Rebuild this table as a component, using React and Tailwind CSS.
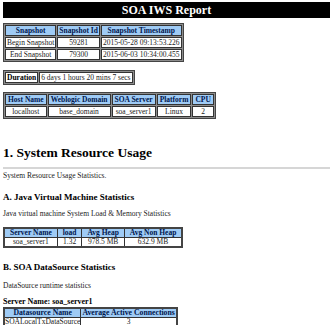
import React from 'react';

// spaced tables (top block) and compact tables (sections)
const Th = ({ children, compact, pad = 'px-[1px]', size = 'text-[7.5px]' }) => (
    <th className={`border border-[#333] bg-[#9fcbf5] py-0 font-bold text-[#00164d] whitespace-nowrap ${pad} ${size} ${compact ? 'leading-[8px]' : 'leading-[9px]'}`}>{children}</th>
);

const Td = ({ children, bold, compact, pad = 'px-[1px]', size = 'text-[7.5px]' }) => (
    <td className={`border border-[#333] bg-white py-0 text-center text-[#222] whitespace-nowrap ${pad} ${size} ${bold ? 'font-bold text-black' : ''} ${compact ? 'leading-[8px]' : 'leading-[9px]'}`}>{children}</td>
);

const Grid = ({ children }) => (
    <table className="border-separate border-spacing-[1px] border border-[#444] bg-[#8c8c8c]">
        <tbody>{children}</tbody>
    </table>
);

const Compact = ({ children }) => (
    <table className="border-collapse border-2 border-[#444]">
        <tbody>{children}</tbody>
    </table>
);

const App = () => {
    return (
        <div className="w-[333px] h-[325px] overflow-hidden bg-white px-[3px] pt-[2px] font-['Liberation_Serif',serif] text-black">
            <div className="h-[16px] bg-black text-center text-[12px] font-bold leading-[16px] text-white">SOA IWS Report</div>

            <div className="mt-[5px]">
                <Grid>
                    <tr><Th>Snapshot</Th><Th>Snapshot Id</Th><Th>Snapshot Timestamp</Th></tr>
                    <tr><Td>Begin Snapshot</Td><Td>59281</Td><Td>2015-05-28 09:13:53.226</Td></tr>
                    <tr><Td>End Snapshot</Td><Td>79300</Td><Td>2015-06-03 10:34:00.455</Td></tr>
                </Grid>
            </div>

            <div className="mt-[8px]">
                <Grid>
                    <tr><Td bold>Duration</Td><Td>6 days 1 hours 20 mins 7 secs</Td></tr>
                </Grid>
            </div>

            <div className="mt-[7px]">
                <Grid>
                    <tr>
                        <Th pad="px-[2px]">Host Name</Th>
                        <Th pad="px-[2px]">Weblogic Domain</Th>
                        <Th pad="px-[2px]">SOA Server</Th>
                        <Th pad="px-[2px]">Platform</Th>
                        <Th pad="px-[2px]">CPU</Th>
                    </tr>
                    <tr>
                        <Td pad="px-[2px]">localhost</Td>
                        <Td pad="px-[2px]">base_domain</Td>
                        <Td pad="px-[2px]">soa_server1</Td>
                        <Td pad="px-[2px]">Linux</Td>
                        <Td pad="px-[2px]">2</Td>
                    </tr>
                </Grid>
            </div>

            <h1 className="mt-[26px] text-[13.5px] font-bold leading-[16px]">1. System Resource Usage</h1>
            <hr className="mt-[6px] border-t-2 border-[#d6d6d6]" />
            <p className="mt-[2px] text-[7.5px] leading-[10px] text-[#222]">System Resource Usage Statistics.</p>

            <h2 className="mt-[11px] text-[9px] font-bold leading-[11px]">A. Java Virtual Machine Statistics</h2>
            <p className="mt-[6px] text-[7.5px] leading-[10px] text-[#222]">Java virtual machine System Load &amp; Memory Statistics</p>
            <div className="mt-[8px]">
                <Compact>
                    <tr>
                        <Th compact pad="px-[5px]">Server Name</Th>
                        <Th compact pad="px-[5px]">load</Th>
                        <Th compact pad="px-[5px]">Avg Heap</Th>
                        <Th compact pad="px-[5px]">Avg Non Heap</Th>
                    </tr>
                    <tr>
                        <Td compact pad="px-[5px]">soa_server1</Td>
                        <Td compact pad="px-[5px]">1.32</Td>
                        <Td compact pad="px-[5px]">978.5 MB</Td>
                        <Td compact pad="px-[5px]">632.9 MB</Td>
                    </tr>
                </Compact>
            </div>

            <h2 className="mt-[14px] text-[9px] font-bold leading-[11px]">B. SOA DataSource Statistics</h2>
            <p className="mt-[8px] text-[7.5px] leading-[10px] text-[#222]">DataSource runtime statistics</p>
            <p className="mt-[6px] text-[8px] font-bold leading-[10px]">Server Name: soa_server1</p>
            <div>
                <Compact>
                    <tr>
                        <Th compact size="text-[7.75px]" pad="px-[1px]">Datasource Name</Th>
                        <Th compact size="text-[7.75px]" pad="px-[1px]">Average Active Connections</Th>
                    </tr>
                    <tr>
                        <Td compact size="text-[7.5px]" pad="px-0">SOALocalTxDataSource</Td>
                        <Td compact size="text-[7.5px]" pad="px-[1px]">3</Td>
                    </tr>
                </Compact>
            </div>
        </div>
    );
};

export default App;
